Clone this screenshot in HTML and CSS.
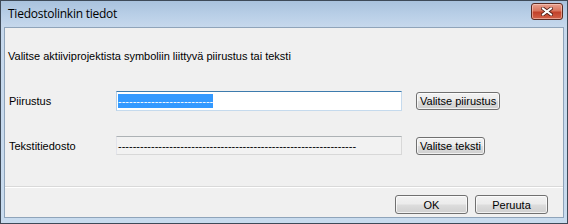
FILE: index.html
```html
<!DOCTYPE html>
<html>
<head>
<meta charset="utf-8">
<link rel="stylesheet" href="styles.css">
</head>
<body>
<div class="window">
  <div class="titlebar">
    <span class="title">Tiedostolinkin tiedot</span>
    <div class="close">
      <svg width="12" height="9" viewBox="0 0 12 9">
        <path d="M2 1.5 L10 7.5 M10 1.5 L2 7.5" stroke="#4a1a12" stroke-width="3.6" stroke-linecap="square"/>
        <path d="M2 1.5 L10 7.5 M10 1.5 L2 7.5" stroke="#ffffff" stroke-width="2.1" stroke-linecap="square"/>
      </svg>
    </div>
  </div>
  <div class="client">
    <div class="content">
      <p class="intro">Valitse aktiiviprojektista symboliin liittyvä piirustus tai teksti</p>
      <div class="row row-first">
        <span class="label">Piirustus</span>
        <div class="field focused"><span class="sel">--------------------------</span></div>
        <button class="btn small">Valitse piirustus</button>
      </div>
      <div class="row row-second">
        <span class="label">Tekstitiedosto</span>
        <div class="field disabled"><span class="dim">-----------------------------------------------------------------</span></div>
        <button class="btn small">Valitse teksti</button>
      </div>
    </div>
    <div class="footer">
      <button class="btn big">OK</button>
      <button class="btn big">Peruuta</button>
    </div>
  </div>
</div>
</body>
</html>
```
FILE: styles.css
```css
html, body {
  margin: 0;
  padding: 0;
  width: 568px;
  height: 224px;
  overflow: hidden;
  background: #ffffff;
}

.window {
  box-sizing: border-box;
  width: 568px;
  height: 224px;
  border: 1px solid #3e4a58;
  background: linear-gradient(#a9c2dd 0px, #b9cfe7 14px, #c6d8ec 26px, #c8dbee 100%);
  display: flex;
  flex-direction: column;
  padding: 0 3px 5px 3px;
}

.titlebar {
  height: 26px;
  display: flex;
  align-items: center;
  justify-content: space-between;
  flex: none;
}

.title {
  font-family: "Open Sans", "Noto Sans", sans-serif;
  font-size: 12px;
  color: #000;
  padding-left: 4px;
  margin-top: -1px;
  letter-spacing: -0.25px;
}

.close {
  box-sizing: border-box;
  width: 32px;
  height: 17px;
  margin-right: 1px;
  margin-top: -5px;
  border: 1px solid #5a2a22;
  border-radius: 3px;
  background: linear-gradient(#e8a18f 0%, #d9755e 45%, #c2412a 55%, #d2634a 100%);
  box-shadow: inset 0 0 0 1px rgba(255,220,210,0.5);
  display: flex;
  align-items: center;
  justify-content: center;
}

.client {
  flex: 1;
  background: #f0f0f0;
  border: 1px solid #8fa4ba;
  display: flex;
  flex-direction: column;
  font-family: "Liberation Sans", Arial, sans-serif;
  font-size: 11px;
  color: #000;
}

.content {
  flex: 1;
  padding: 0 3px;
}

.intro {
  margin: 22px 0 0 0;
  line-height: 13px;
}

.row {
  display: flex;
  align-items: center;
}

.row-first {
  margin-top: 28px;
}

.row-second {
  margin-top: 25px;
}

.label {
  box-sizing: border-box;
  width: 108px;
  padding-left: 1px;
}

.field {
  box-sizing: border-box;
  width: 286px;
  height: 20px;
  display: flex;
  align-items: center;
  padding-left: 1px;
  overflow: hidden;
  white-space: nowrap;
}

.field.focused {
  background: #ffffff;
  border: 1px solid #c5daed;
  border-top-color: #3d7bad;
  border-left-color: #b5cfe7;
}

.field.disabled {
  background: #f2f2f2;
  border: 1px solid #d8d8d8;
  border-top-color: #adb2b5;
  border-left-color: #e2e3ea;
  height: 19px;
}

.sel {
  background: #3399ff;
  color: #ffffff;
  line-height: 14px;
}

.dim {
  color: #000;
}

.btn {
  box-sizing: border-box;
  font-family: "Liberation Sans", Arial, sans-serif;
  font-size: 11px;
  color: #000;
  border: 1px solid #707070;
  border-radius: 3px;
  background: linear-gradient(#f2f2f2 0%, #ebebeb 49%, #dddddd 51%, #cfcfcf 100%);
  box-shadow: inset 0 0 0 1px rgba(255,255,255,0.7);
  padding: 0;
  margin: 0;
}

.btn.small {
  margin-left: 14px;
  height: 18px;
  padding: 0 3px;
}

.footer {
  box-sizing: border-box;
  height: 31px;
  flex: none;
  border-top: 1px solid #d9d9d9;
  box-shadow: inset 0 1px 0 #ffffff;
  display: flex;
  justify-content: flex-end;
  align-items: flex-start;
  gap: 7px;
  padding: 8px 15px 0 0;
}

.btn.big {
  width: 73px;
  height: 19px;
  font-size: 11px;
}
```
